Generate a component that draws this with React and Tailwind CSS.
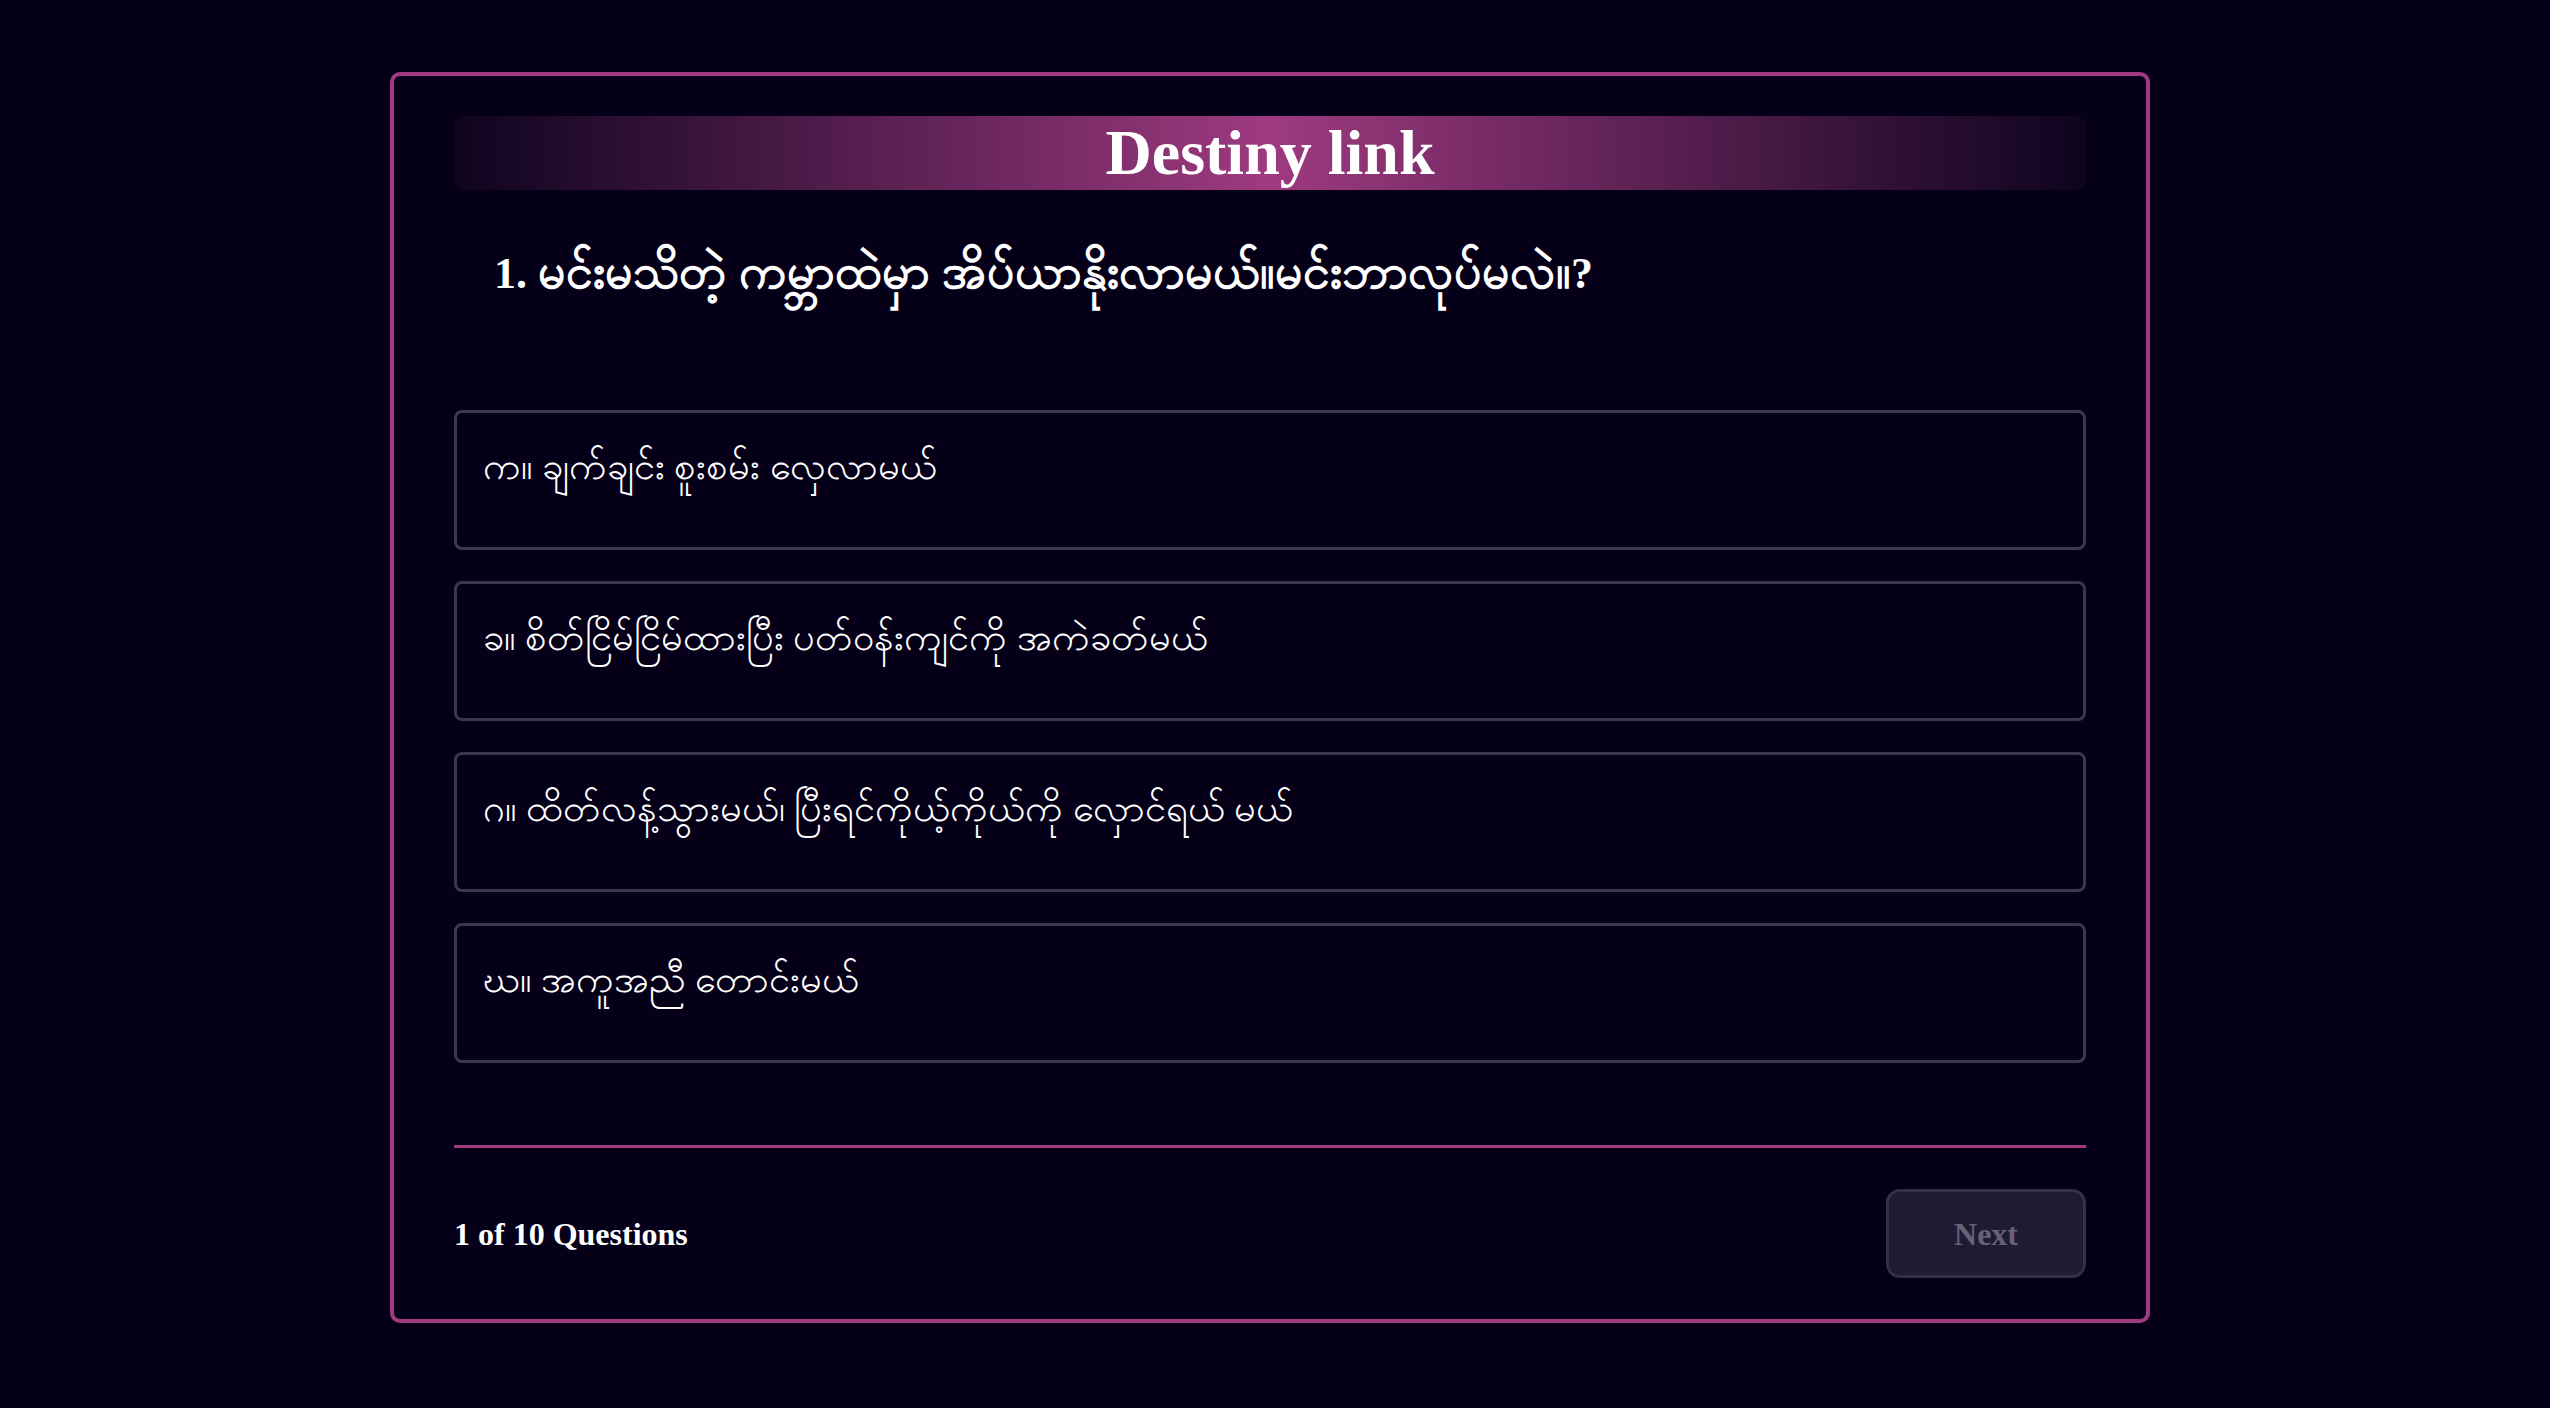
import React from "react";

const options = [
  "က။ ချက်ချင်း စူးစမ်း လှေလာမယ်",
  "ခ။ စိတ်ငြိမ်ငြိမ်ထားပြီး ပတ်ဝန်းကျင်ကို အကဲခတ်မယ်",
  "ဂ။ ထိတ်လန့်သွားမယ်၊ ပြီးရင်ကိုယ့်ကိုယ်ကို လှောင်ရယ် မယ်",
  "ဃ။ အကူအညီ တောင်းမယ်",
];

function App() {
  return (
    <div className="min-h-screen bg-[#050018] pt-[72px] font-['Liberation_Serif',serif] text-white">
      <div className="flex justify-center pr-[10px]">
        <div className="w-[1760px] rounded-[10px] border-4 border-[#a03b82] px-[60px] pt-10 pb-[41px]">
          <div className="flex h-[74px] items-center justify-center rounded-[10px] bg-[linear-gradient(90deg,rgba(158,58,128,0.06),#9e3a80_50%,rgba(158,58,128,0.06))]">
            <h1 className="text-[64px] font-bold leading-none">Destiny link</h1>
          </div>

          <h2 className="mt-[52px] h-[60px] px-10 text-[44px] font-bold leading-[60px]">
            1. <span className="text-[48px]">မင်းမသိတဲ့ ကမ္ဘာထဲမှာ အိပ်ယာနိုးလာမယ်။မင်းဘာလုပ်မလဲ။</span>?
          </h2>

          <div className="mt-[108px] flex flex-col gap-[31px]">
            {options.map((opt) => (
              <div
                key={opt}
                className="h-[140px] rounded-[8px] border-[3px] border-[#3b3849] px-[26px] pt-[29px] text-[38px] leading-[48px]"
              >
                {opt}
              </div>
            ))}
          </div>

          <div className="mt-[82px] h-[3px] bg-[#a03b82]" />

          <div className="mt-[41px] flex items-center justify-between">
            <p className="text-[32px] font-bold">1 of 10 Questions</p>
            <button className="h-[89px] w-[200px] rounded-[14px] border-[3px] border-[#34304a] bg-[#1f1b33] text-[32px] font-bold text-[#66627a]">
              Next
            </button>
          </div>
        </div>
      </div>
    </div>
  );
}

export default App;
